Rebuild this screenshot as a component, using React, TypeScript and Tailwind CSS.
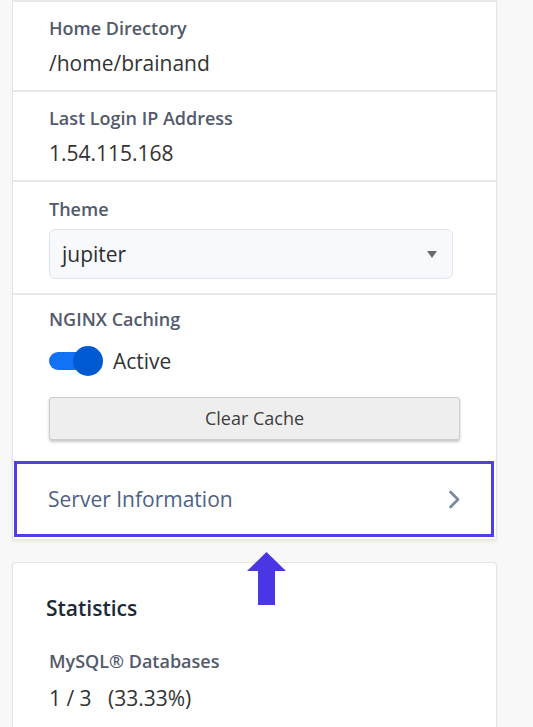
import React from "react";

const FONT = { fontFamily: '"Open Sans", "Noto Sans", sans-serif' };

function InfoRow({ label, value }: { label: string; value: string }) {
  return (
    <div className="border-b-2 border-[#e9e9e9] pb-[13px] pl-[36px] pt-[14px]">
      <div className="mb-[9px] text-[18px] font-semibold leading-[24px] text-[#525a6b]">
        {label}
      </div>
      <div className="text-[21px] leading-[28px] text-[#333333]">{value}</div>
    </div>
  );
}

function Toggle() {
  return (
    <div className="relative h-[30px] w-[54px] shrink-0">
      <div className="absolute left-0 top-[6px] h-[18px] w-[46px] rounded-full bg-[#1272f5]" />
      <div className="absolute right-0 top-0 h-[30px] w-[30px] rounded-full bg-[#005bd3]" />
    </div>
  );
}

export default function App() {
  return (
    <div className="relative min-h-[727px] w-[533px] overflow-hidden bg-[#f8f8f8] pl-[12px]" style={FONT}>
      {/* Account details card */}
      <div className="w-[485px] border-x border-b border-t-2 border-[#e6e6e6] border-t-[#e9e9e9] bg-white shadow-[0_2px_3px_rgba(0,0,0,0.06)]">
        <InfoRow label="Home Directory" value="/home/brainand" />
        <InfoRow label="Last Login IP Address" value="1.54.115.168" />

        {/* Theme */}
        <div className="border-b-2 border-[#e9e9e9] pb-[14px] pl-[36px] pt-[15px]">
          <div className="mb-[8px] text-[18px] font-semibold leading-[24px] text-[#525a6b]">
            Theme
          </div>
          <div className="flex h-[50px] w-[404px] items-center justify-between rounded-[6px] border border-[#dfe4ec] bg-[#f7f9fc] pl-[12px] pr-[15px]">
            <span className="text-[21px] leading-[28px] text-[#2e2e2e]">jupiter</span>
            <svg width="10" height="7" viewBox="0 0 10 7">
              <polygon points="0,0 10,0 5,7" fill="#6b6b6b" />
            </svg>
          </div>
        </div>

        {/* NGINX caching */}
        <div className="pb-[21px] pl-[36px] pt-[12px]">
          <div className="text-[18px] font-semibold leading-[24px] text-[#525a6b]">
            NGINX Caching
          </div>
          <div className="mt-[15px] flex h-[30px] items-center gap-[10px]">
            <Toggle />
            <span className="text-[21px] leading-[28px] text-[#333333]">Active</span>
          </div>
          <button className="mt-[21px] flex h-[43px] w-[411px] items-center justify-center rounded-[3px] border border-[#cdcdcd] bg-[#eeeeee] text-[18px] text-[#3d3d3d] shadow-[0_2px_3px_rgba(0,0,0,0.22)]">
            Clear Cache
          </button>
        </div>

        {/* Server information */}
        <div className="pb-[2px] pl-[1px] pr-[2px]">
          <div className="flex h-[76px] items-center justify-between border-[3px] border-[#4f3fe6] pl-[31px] pr-[30px]">
            <span className="text-[21px] leading-[28px] text-[#4d6283]">Server Information</span>
            <svg width="13" height="19" viewBox="0 0 13 19" fill="none">
              <path d="M2.5 2 L10 9.5 L2.5 17" stroke="#7b8aa3" strokeWidth="2.8" strokeLinecap="round" strokeLinejoin="round" />
            </svg>
          </div>
        </div>
      </div>

      {/* Statistics card */}
      <div className="mt-[22px] w-[485px] rounded-[4px] border border-[#e6e6e6] bg-white pb-[30px] pt-[31px] shadow-[0_1px_3px_rgba(0,0,0,0.08)]">
        <div className="pl-[33px] text-[21px] font-semibold leading-[28px] text-[#1d2939]">
          Statistics
        </div>
        <div className="mt-[27px] pl-[36px] text-[18px] font-semibold leading-[24px] text-[#525a6b]">
          MySQL® Databases
        </div>
        <div className="mt-[11px] whitespace-pre pl-[36px] text-[21px] leading-[28px] text-[#333333]">
          {"1 / 3   (33.33%)"}
        </div>
      </div>

      {/* Annotation arrow */}
      <svg className="absolute left-[247px] top-[552px]" width="39" height="53" viewBox="0 0 39 53">
        <polygon points="19.5,0 39,19 28,19 28,53 11,53 11,19 0,19" fill="#4a36e2" />
      </svg>
    </div>
  );
}
